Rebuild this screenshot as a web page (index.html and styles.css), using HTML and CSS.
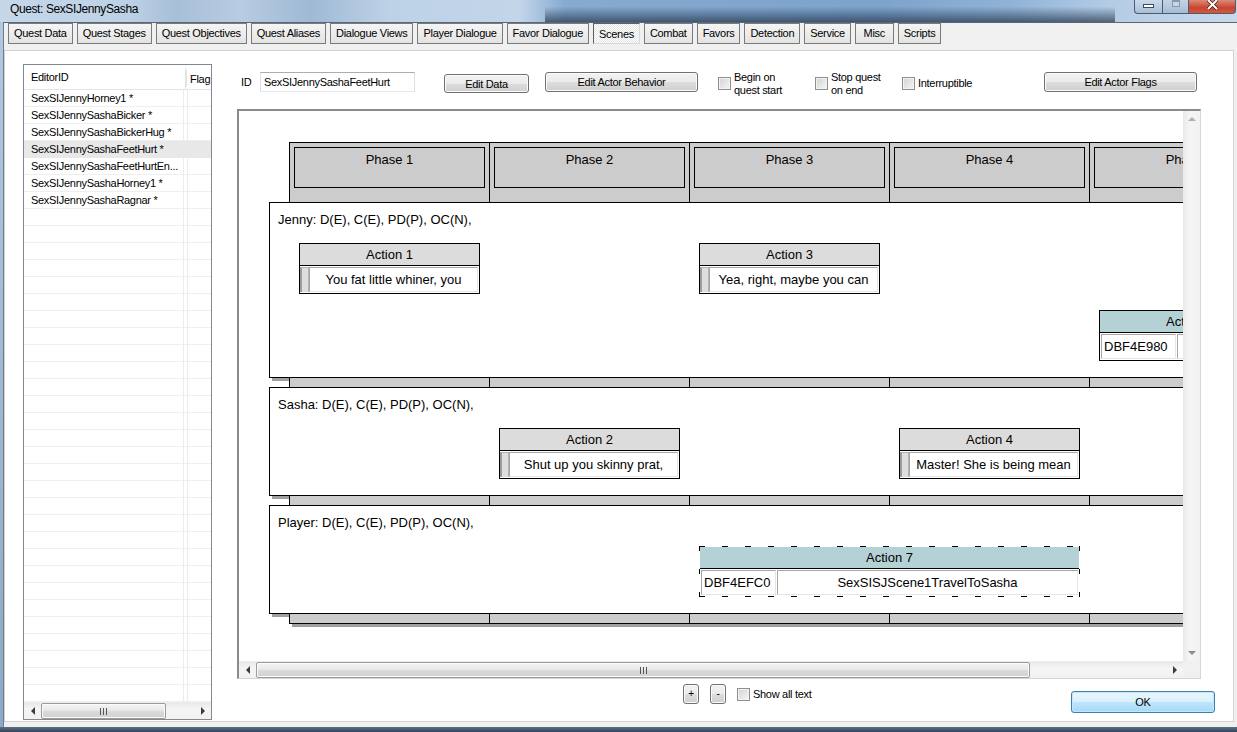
FILE: index.html
```html
<!DOCTYPE html>
<html>
<head>
    <title>Quest: SexSIJennySasha</title>
    <link rel="stylesheet" href="styles.css">
</head>
<body>
<div class="window">
    <div class="titlebar">
        <span class="caption">Quest: SexSIJennySasha</span>
        <div class="capbtns">
            <div class="capbtn minbtn"><span class="minglyph"></span></div>
            <div class="capbtn maxbtn"><span class="maxglyph"></span></div>
            <div class="capbtn closebtn">
                <svg width="13" height="10" viewBox="0 0 13 10">
                    <path d="M2 0 L11 9 M11 0 L2 9" stroke="#3a1a14" stroke-width="3.4"/>
                    <path d="M2 0 L11 9 M11 0 L2 9" stroke="#fff" stroke-width="2"/>
                </svg>
            </div>
        </div>
    </div>

    <div class="client">
        <div class="tabs">
            <div class="tab">Quest Data</div>
            <div class="tab">Quest Stages</div>
            <div class="tab">Quest Objectives</div>
            <div class="tab">Quest Aliases</div>
            <div class="tab">Dialogue Views</div>
            <div class="tab">Player Dialogue</div>
            <div class="tab">Favor Dialogue</div>
            <div class="tab selected">Scenes</div>
            <div class="tab">Combat</div>
            <div class="tab">Favors</div>
            <div class="tab">Detection</div>
            <div class="tab">Service</div>
            <div class="tab">Misc</div>
            <div class="tab">Scripts</div>
        </div>

        <div class="page">
            <!-- scene list -->
            <div class="listbox">
                <div class="listhead">
                    <div class="col-id">EditorID</div>
                    <div class="col-flag">Flag</div>
                </div>
                <div class="listrows">
                    <div class="row">SexSIJennyHorney1 *</div>
                    <div class="row">SexSIJennySashaBicker *</div>
                    <div class="row">SexSIJennySashaBickerHug *</div>
                    <div class="row current">SexSIJennySashaFeetHurt *</div>
                    <div class="row">SexSIJennySashaFeetHurtEn...</div>
                    <div class="row">SexSIJennySashaHorney1 *</div>
                    <div class="row">SexSIJennySashaRagnar *</div>
                </div>
                <div class="hbar">
                    <div class="arrowbtn"><span class="arr-l"></span></div>
                    <div class="thumb list-thumb"><span class="grip"></span></div>
                    <div class="track"></div>
                    <div class="arrowbtn"><span class="arr-r"></span></div>
                </div>
            </div>

            <!-- scene editor -->
            <div class="editor">
                <div class="toolbar">
                    <span class="idlabel">ID</span>
                    <div class="idbox">SexSIJennySashaFeetHurt</div>
                    <div class="btn edit-data">Edit Data</div>
                    <div class="btn edit-behavior">Edit Actor Behavior</div>
                    <label class="chk g1"><span class="box"></span><span>Begin on<br>quest start</span></label>
                    <label class="chk g2"><span class="box"></span><span>Stop quest<br>on end</span></label>
                    <label class="chk g3"><span class="box"></span><span>Interruptible</span></label>
                    <div class="btn edit-flags">Edit Actor Flags</div>
                </div>

                <div class="canvas">
                    <div class="viewport">
                        <div class="shade jenny"></div>
                        <div class="shade sasha"></div>
                        <div class="shade player"></div>

                        <div class="phase p1"><div class="phase-title">Phase 1</div></div>
                        <div class="phase p2"><div class="phase-title">Phase 2</div></div>
                        <div class="phase p3"><div class="phase-title">Phase 3</div></div>
                        <div class="phase p4"><div class="phase-title">Phase 4</div></div>
                        <div class="phase p5"><div class="phase-title">Phase 5</div></div>

                        <div class="lane jenny">
                            Jenny: D(E), C(E), PD(P), OC(N),
                            <div class="act c1">
                                <div class="act-head">Action 1</div>
                                <div class="act-body"><span class="knob"></span><span class="say">You fat little whiner, you</span></div>
                            </div>
                            <div class="act c3">
                                <div class="act-head">Action 3</div>
                                <div class="act-body"><span class="knob"></span><span class="say">Yea, right, maybe you can</span></div>
                            </div>
                            <div class="act c5 low pkg">
                                <div class="act-head">Action 5</div>
                                <div class="act-body"><span class="formid">DBF4E980</span><span class="say"></span></div>
                            </div>
                        </div>

                        <div class="lane sasha">
                            Sasha: D(E), C(E), PD(P), OC(N),
                            <div class="act c2">
                                <div class="act-head">Action 2</div>
                                <div class="act-body"><span class="knob"></span><span class="say">Shut up you skinny prat,</span></div>
                            </div>
                            <div class="act c4">
                                <div class="act-head">Action 4</div>
                                <div class="act-body"><span class="knob"></span><span class="say">Master! She is being mean</span></div>
                            </div>
                        </div>

                        <div class="lane player">
                            Player: D(E), C(E), PD(P), OC(N),
                            <div class="act c3 wide pkg picked">
                                <div class="act-head">Action 7</div>
                                <div class="act-body"><span class="formid">DBF4EFC0</span><span class="say">SexSISJScene1TravelToSasha</span></div>
                            </div>
                        </div>
                    </div>

                    <div class="vbar">
                        <div class="arrowbtn"><span class="arr-u"></span></div>
                        <div class="track"></div>
                        <div class="arrowbtn"><span class="arr-d"></span></div>
                    </div>
                    <div class="hbar">
                        <div class="arrowbtn"><span class="arr-l"></span></div>
                        <div class="thumb canvas-thumb"><span class="grip"></span></div>
                        <div class="track"></div>
                        <div class="arrowbtn"><span class="arr-r"></span></div>
                    </div>
                    <div class="corner"></div>
                </div>

                <div class="footer">
                    <div class="btn tiny">+</div>
                    <div class="btn tiny minus">-</div>
                    <label class="chk showall"><span class="box"></span><span>Show all text</span></label>
                    <div class="btn okbtn">OK</div>
                </div>
            </div>
        </div>
    </div>
    <div class="frame-bottom"></div>
</div>
</body>
</html>
```

FILE: styles.css
```css
* {
    box-sizing: border-box;
}

body {
    margin: 0;
    width: 1237px;
    height: 732px;
    overflow: hidden;
    font-family: "Liberation Sans", Arial, sans-serif;
    font-size: 11px;
    letter-spacing: -0.3px;
    color: #000;
    background: #a9c1da;
}

.window {
    display: flex;
    flex-direction: column;
    height: 732px;
    background: linear-gradient(#b3c9e0, #8ea9c6);
}

/* title bar (aero glass) */
.titlebar {
    height: 22px;
    display: flex;
    align-items: flex-start;
    background:
        linear-gradient(180deg, rgba(35, 52, 74, 0) 30%, rgba(35, 52, 74, 0.7) 100%) 545px 0 / 570px 100% no-repeat,
        linear-gradient(90deg, #c5d7e9 0, #bdd1e6 130px, #a7bfd8 175px, #b8cce2 240px, #9fb9d4 310px, #bed2e7 390px, #c2d5e9 520px, #86aad0 565px, #7da3cc 880px, #90b2d7 1010px, #b4cce5 1110px, #c8d9eb 1237px);
}

.caption {
    padding: 2px 0 0 10px;
    font-size: 12px;
    letter-spacing: -0.4px;
    line-height: 14px;
}

.capbtns {
    display: flex;
    margin-left: auto;
    margin-right: 1px;
}

.capbtn {
    height: 14px;
    border: 1px solid #4d5c6d;
    border-top: none;
    display: flex;
    justify-content: center;
    align-items: flex-start;
}

.minbtn {
    width: 28px;
    border-radius: 0 0 0 4px;
    border-right: none;
    background: linear-gradient(#cbdaea, #a9bfd7);
}

.maxbtn {
    width: 27px;
    background: linear-gradient(#c4d4e6, #a6bcd5);
}

.closebtn {
    width: 47px;
    border-left: none;
    border-radius: 0 0 4px 0;
    background: linear-gradient(#dc8a77, #c8452f 60%, #d25a40);
}

.minglyph {
    width: 11px;
    height: 4px;
    margin-top: 4px;
    background: #fff;
    border: 1px solid #3d4a58;
}

.maxglyph {
    width: 8px;
    height: 7px;
    border: 1px solid #8598ad;
    border-top-width: 2px;
    background: #c9d6e4;
}

.closebtn svg {
    display: block;
}

/* client area */
.client {
    flex: 1;
    display: flex;
    flex-direction: column;
    margin-left: 3px;
    border-left: 1px solid #6e7c8b;
    border-top: 1px solid #56687a;
    background: #f0f0f0;
}

.frame-bottom {
    height: 5px;
    background: linear-gradient(#5b6f85, #33465b);
}

.tabs {
    display: flex;
    gap: 4px;
    padding-left: 4px;
    height: 21px;
}

.tab {
    height: 21px;
    min-width: 39px;
    padding: 0 5px;
    border: 1px solid #7a7a7a;
    background: linear-gradient(#f5f5f5, #e3e3e3);
    line-height: 19px;
    text-align: center;
    white-space: nowrap;
}

.tab.selected {
    border-color: #5f5f5f #d8d8d8 #d8d8d8 #5f5f5f;
    padding-top: 1px;
    background: repeating-conic-gradient(#ffffff 0 25%, #e4e4e4 0 50%) 0 0 / 2px 2px;
}

.page {
    margin-top: 6px;
    width: 1230px;
    height: 672px;
    border: 1px solid #cfd3d8;
    background: #fff;
    display: flex;
    padding: 13px 0 0 18px;
}

/* scene list */
.listbox {
    width: 189px;
    height: 656px;
    border: 1px solid #828790;
    display: flex;
    flex-direction: column;
    background: #fff;
}

.listhead {
    height: 25px;
    display: flex;
    align-items: center;
    padding-top: 3px;
    border-bottom: 1px solid #e5e5e5;
    overflow: hidden;
}

.listhead .col-id {
    width: 162px;
    padding-left: 7px;
    border-right: 1px solid #e3e3e3;
    box-shadow: 3px 0 0 -2px #e3e3e3;
    height: 21px;
    line-height: 19px;
}

.listhead .col-flag {
    padding-left: 4px;
    white-space: nowrap;
}

.listrows {
    flex: 1;
    background:
        linear-gradient(90deg, transparent 159px, #ececec 159px 160px, transparent 160px 163px, #ececec 163px 164px, transparent 164px),
        repeating-linear-gradient(180deg, transparent 0 16px, #efefef 16px 17px);
}

.row {
    height: 17px;
    line-height: 16px;
    padding-left: 7px;
    white-space: nowrap;
}

.row.current {
    background: #e8e8e8;
}

/* scrollbars */
.hbar {
    height: 17px;
    display: flex;
    background: linear-gradient(#e9e9e9, #f5f5f5 40%, #f1f1f1);
    border-top: 1px solid #ececec;
}

.vbar {
    display: flex;
    flex-direction: column;
    background: linear-gradient(90deg, #e9e9e9, #f5f5f5 40%, #f1f1f1);
}

.hbar .track,
.vbar .track {
    flex: 1;
}

.arrowbtn {
    width: 17px;
    height: 16px;
    display: flex;
    align-items: center;
    justify-content: center;
}

.arr-l {
    border-right: 4px solid #3c3c3c;
    border-top: 4px solid transparent;
    border-bottom: 4px solid transparent;
}

.arr-r {
    border-left: 4px solid #3c3c3c;
    border-top: 4px solid transparent;
    border-bottom: 4px solid transparent;
}

.arr-u {
    border-bottom: 4px solid #b0b0b0;
    border-left: 4px solid transparent;
    border-right: 4px solid transparent;
}

.arr-d {
    border-top: 4px solid #8a8a8a;
    border-left: 4px solid transparent;
    border-right: 4px solid transparent;
}

.thumb {
    height: 16px;
    border: 1px solid #9b9b9b;
    border-radius: 2px;
    background: linear-gradient(#f4f4f4, #e9e9e9 45%, #d9d9d9 55%, #d2d2d2);
    box-shadow: inset 0 0 0 1px #fbfbfb;
    display: flex;
    align-items: center;
    justify-content: center;
}

.list-thumb {
    width: 125px;
}

.canvas-thumb {
    width: 774px;
}

.grip {
    width: 7px;
    height: 7px;
    background: repeating-linear-gradient(90deg, #555 0 1px, transparent 1px 3px);
}

/* editor */
.editor {
    margin-left: 25px;
    width: 978px;
    display: flex;
    flex-direction: column;
}

.toolbar {
    display: flex;
    align-items: center;
    height: 20px;
    margin-top: 8px;
}

.idlabel {
    width: 19px;
    margin-left: 4px;
}

.idbox {
    width: 155px;
    height: 20px;
    border: 1px solid #dbdfe6;
    border-top-color: #abadb3;
    border-bottom-color: #e3e9ef;
    padding: 2px 0 0 3px;
    white-space: nowrap;
    line-height: 15px;
}

.btn {
    height: 20px;
    border: 1px solid #707070;
    border-radius: 3px;
    background: linear-gradient(#f2f2f2, #ebebeb 50%, #dddddd 51%, #cfcfcf);
    box-shadow: inset 0 0 0 1px #fbfbfb;
    text-align: center;
    line-height: 18px;
    white-space: nowrap;
}

.edit-data {
    width: 85px;
    height: 19px;
    margin: 3px 0 0 29px;
}

.edit-behavior {
    width: 153px;
    margin-left: 16px;
}

.edit-flags {
    width: 153px;
}

.chk {
    display: flex;
    align-items: center;
    gap: 3px;
    line-height: 13px;
    white-space: nowrap;
}

.toolbar .chk {
    padding-top: 3px;
}

.chk .box {
    width: 13px;
    height: 13px;
    flex: none;
    border: 1px solid #8e8f8f;
    background: linear-gradient(135deg, #d3d3d3, #f6f6f6);
    box-shadow: inset 0 0 0 1px #f2f2f2;
}

.chk.g1 {
    width: 97px;
    margin-left: 20px;
}

.chk.g2 {
    width: 87px;
}

.chk.g3 {
    width: 142px;
}

/* scene canvas */
.canvas {
    width: 964px;
    height: 570px;
    margin-top: 17px;
    border-style: solid;
    border-width: 2px 1px 1px 2px;
    border-color: #8a8a8a #d6d6d6 #d6d6d6 #8a8a8a;
    display: grid;
    grid-template-columns: 944px 1fr;
    grid-template-rows: 550px 1fr;
    background: #fff;
}

.viewport {
    position: relative;
    overflow: hidden;
    font-size: 13px;
    letter-spacing: 0;
}

.corner {
    background: #f0f0f0;
}

.phase {
    position: absolute;
    top: 31px;
    width: 201px;
    height: 482px;
    padding: 4px;
    border: 1px solid #000;
    background: #cccccc;
    box-shadow: 3px 3px 0 #a0a0a0;
}

.p1 { left: 50px; }
.p2 { left: 250px; }
.p3 { left: 450px; }
.p4 { left: 650px; }
.p5 { left: 850px; }

.phase-title {
    height: 41px;
    border: 1px solid #000;
    padding-top: 4px;
    line-height: 15px;
    text-align: center;
    white-space: nowrap;
}

.lane,
.shade {
    position: absolute;
    left: 30px;
    width: 1200px;
}

.lane {
    border: 1px solid #000;
    background: #fff;
    padding: 9px 8px;
    line-height: 16px;
}

.shade {
    background: #a0a0a0;
    transform: translate(3px, 3px);
}

.jenny { top: 91px; height: 176px; }
.sasha { top: 276px; height: 109px; }
.player { top: 394px; height: 109px; }

/* action blocks */
.act {
    position: absolute;
    top: 40px;
    width: 181px;
    height: 51px;
    border: 1px solid #000;
    background: #fff;
    display: flex;
    flex-direction: column;
}

.c1 { left: 29px; }
.c2 { left: 229px; }
.c3 { left: 429px; }
.c4 { left: 629px; }
.c5 { left: 829px; }

.act.low { top: 107px; }
.act.wide { width: 381px; }

.act-head {
    height: 22px;
    border-bottom: 1px solid #000;
    background: #dcdcdc;
    text-align: center;
    line-height: 21px;
    white-space: nowrap;
}

.pkg .act-head {
    background: #b4d2d6;
}

.act-body {
    flex: 1;
    display: flex;
    padding: 1px 1px 1px 0;
}

.knob {
    width: 9px;
    border-left: 2px solid #9c9c9c;
    border-right: 1px solid #b4b4b4;
    border-top: 1px solid #b4b4b4;
    background: #dedede;
}

.say {
    flex: 1;
    border: 1px solid;
    border-color: #a6a6a6 #e6e6e6 #e6e6e6 #a6a6a6;
    text-align: center;
    line-height: 23px;
    white-space: nowrap;
    overflow: hidden;
}

.formid {
    width: 75px;
    margin-left: 1px;
    margin-right: 1px;
    border: 1px solid;
    border-color: #a6a6a6 #e6e6e6 #e6e6e6 #a6a6a6;
    padding-left: 2px;
    line-height: 23px;
}

.act.picked {
    border-color: transparent;
}

.act.picked::after {
    content: "";
    position: absolute;
    inset: -1px;
    pointer-events: none;
    background:
        repeating-linear-gradient(90deg, #000 0 6px, transparent 6px 23px) top / 100% 1px no-repeat,
        repeating-linear-gradient(90deg, #000 0 6px, transparent 6px 23px) bottom / 100% 1px no-repeat,
        repeating-linear-gradient(180deg, #000 0 5px, transparent 5px 23px) left / 1px 100% no-repeat,
        repeating-linear-gradient(180deg, #000 0 5px, transparent 5px 23px) right / 1px 100% no-repeat;
}

/* footer */
.footer {
    display: flex;
    align-items: flex-start;
    padding-left: 446px;
}

.btn.tiny {
    width: 16px;
    margin-top: 5px;
    font-size: 10px;
    line-height: 17px;
}

.btn.minus {
    margin-left: 11px;
}

.chk.showall {
    margin: 9px 0 0 11px;
}

.okbtn {
    width: 144px;
    height: 22px;
    margin: 12px 0 0 auto;
    border-color: #3c7fb1;
    background: linear-gradient(#eaf6fd, #d9f0fc 50%, #bee6fd 51%, #a7d9f5);
    box-shadow: inset 0 0 0 1px #c3e7f8;
    line-height: 20px;
}
```
